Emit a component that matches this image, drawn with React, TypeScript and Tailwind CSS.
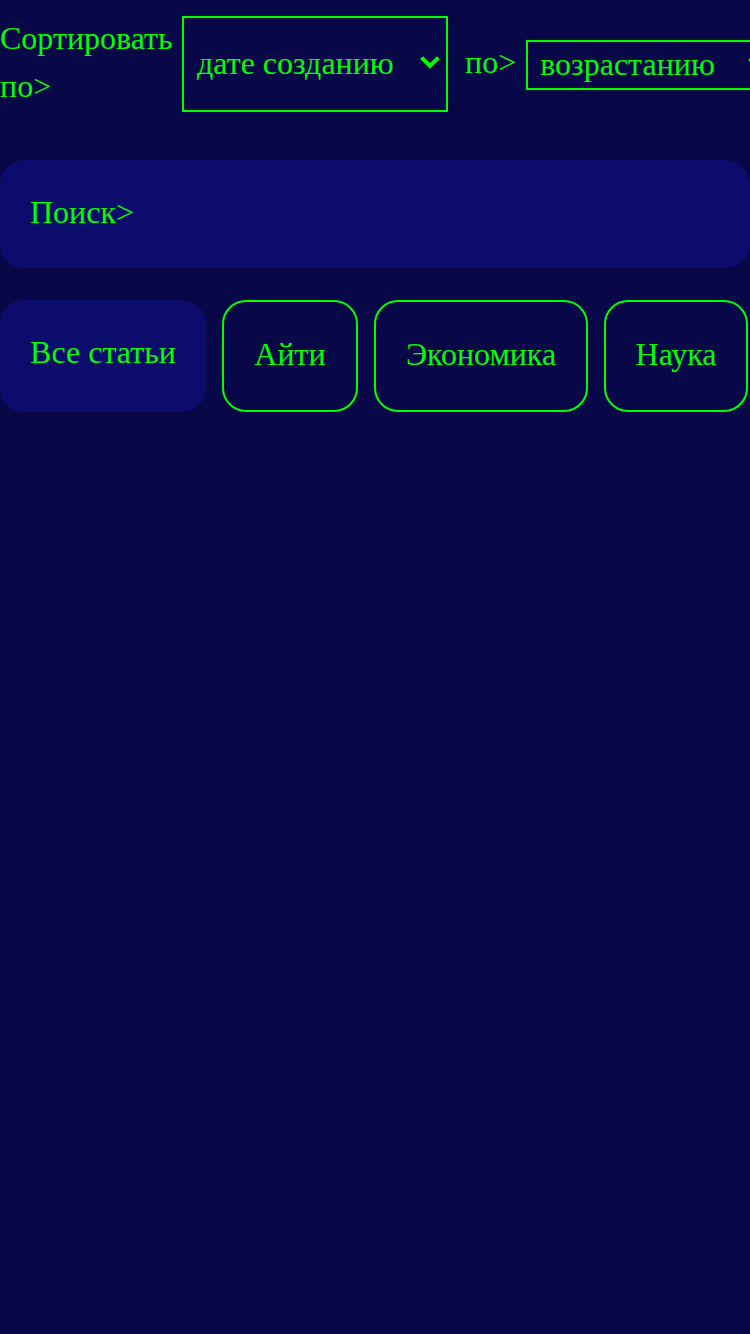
import React from "react";

function Chevron() {
  return (
    <svg width="20" height="14" viewBox="0 0 20 14" className="shrink-0">
      <path d="M3 3 L10 10 L17 3" fill="none" stroke="#00ff00" strokeWidth="4" strokeLinecap="square" />
    </svg>
  );
}

export default function App() {
  return (
    <div
      className="min-h-[1334px] w-[750px] overflow-hidden bg-[#080848] text-[#00ff00]"
      style={{ fontFamily: '"Liberation Serif", "Times New Roman", serif' }}
    >
      <div className="flex items-center gap-[10px] pt-[14px] text-[32px] whitespace-nowrap">
        <div className="w-[172px] shrink-0 whitespace-normal pb-[4px] leading-[48px]">Сортировать по&gt;</div>
        <div className="flex h-[96px] w-[266px] shrink-0 items-center justify-between border-2 border-[#00ff00] pb-[2px] pl-[13px] pr-[6px]">
          <span>дате созданию</span>
          <Chevron />
        </div>
        <div className="ml-[7px] shrink-0 pb-[4px]">по&gt;</div>
        <div className="mt-[2px] flex h-[50px] w-[250px] shrink-0 items-center justify-between border-2 border-[#00ff00] pb-[2px] pl-[12px] pr-[6px]">
          <span>возрастанию</span>
          <Chevron />
        </div>
      </div>

      <div className="mt-[46px] flex h-[108px] items-center rounded-[24px] bg-[#0c0c6c] px-[30px] pb-[4px] text-[32px]">
        Поиск&gt;
      </div>

      <div className="mt-[32px] flex gap-[16px] text-[32px]">
        <div className="flex h-[112px] w-[206px] items-center justify-center rounded-[24px] bg-[#0c0c6c] pb-[8px]">
          Все статьи
        </div>
        <div className="flex h-[112px] w-[136px] items-center justify-center rounded-[24px] border-2 border-[#00ff00] pb-[4px]">
          Айти
        </div>
        <div className="flex h-[112px] w-[214px] items-center justify-center rounded-[24px] border-2 border-[#00ff00] pb-[4px]">
          Экономика
        </div>
        <div className="flex h-[112px] w-[144px] items-center justify-center rounded-[24px] border-2 border-[#00ff00] pb-[4px]">
          Наука
        </div>
      </div>
    </div>
  );
}
